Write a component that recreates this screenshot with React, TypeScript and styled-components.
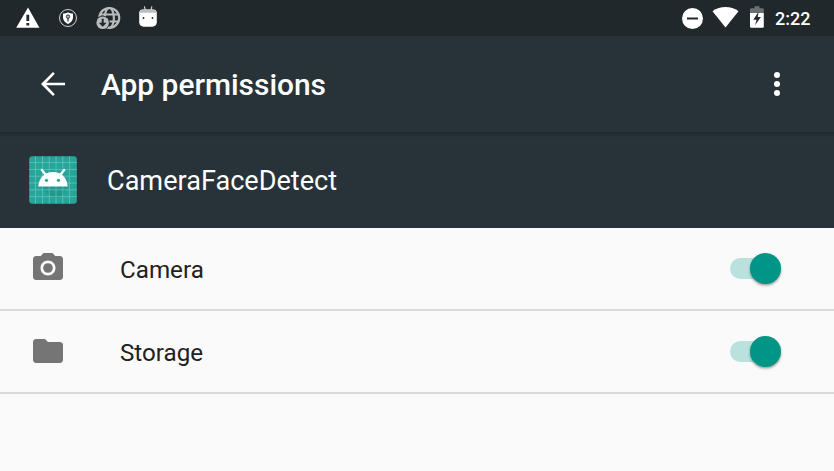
import React from "react";
import styled, { createGlobalStyle } from "styled-components";

const GlobalStyle = createGlobalStyle`
  * { box-sizing: border-box; }
  html, body { margin: 0; background: #fafafa; }
  body { font-family: Roboto, "Noto Sans", sans-serif; overflow: hidden; }
  svg { display: block; flex: none; }
`;

const Screen = styled.main`
  width: 834px;
  height: 471px;
  display: flex;
  flex-direction: column;
  background: #fafafa;
`;

const StatusBar = styled.div`
  height: 36px;
  flex: none;
  display: flex;
  align-items: center;
  justify-content: space-between;
  padding: 0 24px 0 12px;
  background: #21282b;
  color: #fff;
`;

const Notifications = styled.div`
  display: flex;
  gap: 8px;
`;

const SystemIcons = styled.div`
  display: flex;
  align-items: center;
`;

const Clock = styled.time`
  width: 35px;
  margin-left: 5px;
  font-size: 18px;
  line-height: 36px;
  padding-top: 1px;
  font-weight: 500;
  white-space: nowrap;
`;

const Toolbar = styled.header`
  height: 96px;
  flex: none;
  display: flex;
  align-items: center;
  padding: 0 39px 0 35px;
  background: #273338;
  color: #fff;
`;

const Title = styled.h1`
  flex: 1;
  margin: 1px 0 0 30px;
  font-size: 29.9px;
  line-height: 36px;
  font-weight: 500;
`;

const IconButton = styled.button`
  display: flex;
  padding: 0;
  border: 0;
  background: none;
  color: inherit;
`;

const AppHeader = styled.section`
  height: 96px;
  flex: none;
  display: flex;
  align-items: center;
  gap: 30px;
  padding-left: 29px;
  background: linear-gradient(#20292e, #232e33 2px, #273338 6px);
  color: #fff;
`;

const AppName = styled.h2`
  margin: 2px 0 0;
  font-size: 27.1px;
  line-height: 32px;
  font-weight: 400;
`;

const List = styled.ul`
  list-style: none;
  margin: 0;
  padding: 0;
`;

const Row = styled.li`
  height: 83px;
  display: flex;
  align-items: center;
  padding: 0 53px 0 30px;
  border-bottom: 2px solid #dadada;
  color: #212121;
`;

const RowIcon = styled.svg`
  width: 36px;
  height: 36px;
  fill: #757575;
  margin-top: -1px;
`;

const Label = styled.span`
  flex: 1;
  margin: 2px 0 0 54px;
  font-size: 24.2px;
  line-height: 28px;
`;

const Track = styled.button<{ $on: boolean }>`
  width: 43px;
  height: 21px;
  margin-right: 8px;
  padding: 0;
  border: 0;
  border-radius: 11px;
  display: flex;
  align-items: center;
  background: ${(p) => (p.$on ? "#b9e1dd" : "#b9b9b9")};
`;

const Thumb = styled.span<{ $on: boolean }>`
  width: 31px;
  height: 31px;
  flex: none;
  margin-left: ${(p) => (p.$on ? "20px" : "-8px")};
  border-radius: 50%;
  background: ${(p) => (p.$on ? "#009587" : "#ececec")};
  box-shadow: 0 1.5px 2.5px rgba(0, 0, 0, 0.38);
`;

const WarningIcon = () => (
  <svg width="32" height="36" viewBox="0 0 32 36">
    <path d="M16 7.6 4.2 27.8h23.2z" fill="#fff" />
    <path d="M14.4 14.7h2.8v6.4h-2.8zM14.4 22.900h2.800v2.600h-2.800z" fill="#21282b" />
  </svg>
);

const ShieldIcon = () => (
  <svg width="32" height="36" viewBox="0 0 32 36">
    <circle cx="16" cy="18" r="8.5" fill="none" stroke="#e3e4e5" strokeWidth="0.9" />
    <path d="M16 12.300c1.800 1.200 3.300 1.300 5 1.300v4c0 2.900-2 4.900-5 6.300-3-1.400-5-3.400-5-6.300v-4c1.700 0 3.200-.1 5-1.300z" fill="#fff" />
    <circle cx="16" cy="16.600" r="1.700" fill="#bbb" stroke="#21282b" strokeWidth="0.900" />
    <path d="M16 18v3.400" stroke="#21282b" strokeWidth="1.200" />
  </svg>
);

const GlobeIcon = () => (
  <svg width="32" height="36" viewBox="0 0 32 36">
    <g fill="none" stroke="#b9bbbc" strokeWidth="2.200">
      <circle cx="17.300" cy="17.900" r="9.900" />
      <ellipse cx="17.300" cy="17.900" rx="4.600" ry="9.900" />
      <path d="M8 14.500h18.400M8 21.500h18.400" />
    </g>
    <circle cx="10.700" cy="22.800" r="7.100" fill="#21282b" />
    <circle cx="10.700" cy="22.800" r="6.300" fill="#b9bbbc" />
    <path d="M9.700 18.800h2v4h2.900l-3.900 3.900-3.900-3.900h2.900z" fill="#21282b" />
  </svg>
);

const DroidHeadIcon = () => (
  <svg width="32" height="36" viewBox="0 0 32 36">
    <path d="m12.400 6.300 1 4M19.900 6.300l-1 4" stroke="#ddd" strokeWidth="1.100" />
    <path d="M7.200 13q0-3.400 3.600-3.600h10.400q3.600.2 3.600 3.600v9.500q-.4 4-4.500 4.200h-8.600q-4.100-.2-4.500-4.200z" fill="#fff" />
    <path d="M7.500 12.700q.3-3.100 3.300-3.300h10.400q3 .2 3.300 3.300z" fill="#bdbdbd" />
    <circle cx="11.500" cy="18" r="0.950" fill="#21282b" />
    <circle cx="20.500" cy="18" r="0.950" fill="#21282b" />
  </svg>
);

const DoNotDisturbIcon = () => (
  <svg width="30" height="36" viewBox="0 0 30 36">
    <circle cx="12.500" cy="18.500" r="10.500" fill="#fff" />
    <path d="M7 17.500h11v2H7z" fill="#21282b" />
  </svg>
);

const WifiIcon = () => (
  <svg width="38" height="36" viewBox="0 0 38 36">
    <path d="M2.500 11.200Q8.500 7 15.500 7t13 4.200L15.500 27.500z" fill="#fff" />
  </svg>
);

const BatteryIcon = () => (
  <svg width="22" height="36" viewBox="0 0 22 36">
    <path d="M6.600 6.200h4.800v2h2.900q1.500 0 1.500 1.200V13H2V9.400q0-1.200 1.400-1.200h3.200z" fill="#6c7072" />
    <path d="M2 13h13.800v13.500q0 1.300-1.300 1.300h-11.200Q2 27.800 2 26.500z" fill="#fff" />
    <path d="M10.700 11.500 5.300 19.700h3.300l-1.600 5.500 5.900-8.200H9.700z" fill="#21282b" />
  </svg>
);

const GRID = [6.5, 13.500, 20.200, 27, 33.800, 40.600];

const AppIcon = () => (
  <svg width="48" height="48" viewBox="0 0 48 48">
    <rect x="0.200" y="0.200" width="47.600" height="47.600" rx="3" fill="#26a69a" />
    <path d="m10 30 11 10q7 5 14-2l4-8z" fill="#20988d" />
    <path d={GRID.map((n) => `M${n} 0v48M0 ${n}h48`).join("")} stroke="#69c4bb" strokeWidth="0.700" />
    <path d="m12.800 14 4.200 5M35.200 14l-4.200 5" stroke="#fff" strokeWidth="2.300" strokeLinecap="round" />
    <path d="M9.300 30.500C10 21.500 15.500 16 24 16s14 5.500 14.700 14.500z" fill="#fff" />
    <circle cx="17.500" cy="24.300" r="1.600" fill="#26a69a" />
    <circle cx="29.500" cy="24.300" r="1.600" fill="#26a69a" />
  </svg>
);

const permissions = [
  {
    name: "Camera",
    icon: (
      <>
        <circle cx="12" cy="12" r="3.200" />
        <path d="M9 2 7.170 4H4c-1.100 0-2 .9-2 2v12c0 1.100.9 2 2 2h16c1.100 0 2-.9 2-2V6c0-1.100-.9-2-2-2h-3.170L15 2H9zm3 15c-2.760 0-5-2.240-5-5s2.240-5 5-5 5 2.240 5 5-2.240 5-5 5z" />
      </>
    ),
  },
  {
    name: "Storage",
    icon: <path d="M10 4H4c-1.100 0-1.990.9-1.990 2L2 18c0 1.100.9 2 2 2h16c1.100 0 2-.9 2-2V8c0-1.100-.9-2-2-2h-8l-2-2z" />,
  },
];

export default function App() {
  const [granted, setGranted] = React.useState<Record<string, boolean>>({ Camera: true, Storage: true });

  return (
    <>
      <GlobalStyle />
      <Screen>
        <StatusBar>
          <Notifications>
            <WarningIcon />
            <ShieldIcon />
            <GlobeIcon />
            <DroidHeadIcon />
          </Notifications>
          <SystemIcons>
            <DoNotDisturbIcon />
            <WifiIcon />
            <BatteryIcon />
            <Clock>2:22</Clock>
          </SystemIcons>
        </StatusBar>
        <Toolbar>
          <IconButton aria-label="Back">
            <svg width="36" height="36" viewBox="0 0 24 24" fill="currentColor">
              <path d="M20 11.100H7.500l5.680-5.870L12 4l-8 8 8 8 1.180-1.230L7.500 12.900H20z" />
            </svg>
          </IconButton>
          <Title>App permissions</Title>
          <IconButton aria-label="More options">
            <svg width="36" height="36" viewBox="0 0 24 24" fill="currentColor">
              <circle cx="12" cy="6" r="2" />
              <circle cx="12" cy="12" r="2" />
              <circle cx="12" cy="18" r="2" />
            </svg>
          </IconButton>
        </Toolbar>
        <AppHeader>
          <AppIcon />
          <AppName>CameraFaceDetect</AppName>
        </AppHeader>
        <List>
          {permissions.map(({ name, icon }) => (
            <Row key={name}>
              <RowIcon viewBox="0 0 24 24">{icon}</RowIcon>
              <Label>{name}</Label>
              <Track
                role="switch"
                aria-label={name}
                aria-checked={granted[name]}
                $on={granted[name]}
                onClick={() => setGranted({ ...granted, [name]: !granted[name] })}
              >
                <Thumb $on={granted[name]} />
              </Track>
            </Row>
          ))}
        </List>
      </Screen>
    </>
  );
}
